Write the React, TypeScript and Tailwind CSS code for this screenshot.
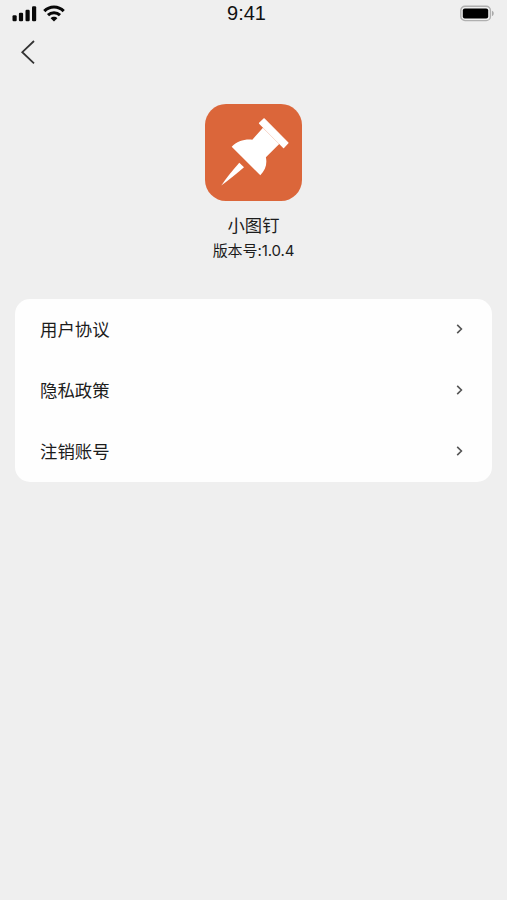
const menuItems = ["用户协议", "隐私政策", "注销账号"];

function StatusBar() {
  return (
    <div className="flex h-7 items-center justify-between pr-[13px] pl-3">
      <div className="flex w-[60px] items-center gap-[6px]">
        <svg width="25" height="16" viewBox="0 0 25 16" fill="#080808">
          <rect x="0.5" y="9.2" width="4.2" height="6" rx="1.2" />
          <rect x="6.9" y="6.8" width="4.2" height="8.4" rx="1.2" />
          <rect x="13.5" y="3.7" width="4.2" height="11.5" rx="1.2" />
          <rect x="20" y="0.2" width="4.2" height="15" rx="1.2" />
        </svg>
        <svg
          className="mb-px shrink-0"
          width="22"
          height="17"
          viewBox="0 0 22 17"
          fill="none"
          stroke="#080808"
          strokeWidth="3.1"
        >
          <path d="M1.3 6.1C6.7.7 15.3.7 20.7 6.1" />
          <path d="M5 10.1C8.4 6.9 13.6 6.9 17 10.1" />
          <path d="M7.6 13.2C9.5 11.3 12.5 11.3 14.4 13.2L11 16.6Z" fill="#080808" stroke="none" />
        </svg>
      </div>
      <span className="mr-[13px] mb-[2px] font-['Liberation_Sans',sans-serif] text-[20px] leading-6 text-[#111]">
        9:41
      </span>
      <div className="flex w-[60px] justify-end">
        <svg className="mb-px" width="35" height="17" viewBox="0 0 35 17">
          <rect x="1.8" y="1.2" width="29.6" height="14.4" rx="4.2" fill="none" stroke="#b0b0b0" strokeWidth="1.4" />
          <rect x="3.8" y="3.4" width="25.4" height="10" rx="2" fill="#000" />
          <path d="M33 5.8C35.3 6.8 35.3 10 33 11Z" fill="#aaa" />
        </svg>
      </div>
    </div>
  );
}

function PinLogo() {
  return (
    <svg width="97" height="97" viewBox="0 0 97 97">
      <rect width="97" height="97" rx="21" fill="#db663a" />
      <g fill="#fff">
        <path
          d="M59.2 14.8L83 38.9L78.6 43.6L54.5 19.3Z"
          stroke="#fff"
          strokeWidth="1.2"
          strokeLinejoin="round"
        />
        <path d="M57.9 23.7L74.2 40L60.9 53.2C62.3 60 60.5 66 55.3 71.3L26.7 42.7C32 37 39.5 35 47.3 35.7L58 23.8Z" />
        <path d="M34.3 58.7L39 63.3C31.5 69.6 24.5 75.3 16.3 81.5C21 74.3 27.6 66.5 34.3 58.7Z" />
      </g>
    </svg>
  );
}

function App() {
  return (
    <div className="min-h-screen bg-[#efefef] font-['Noto_Sans_CJK_SC',sans-serif] text-[#1c1c1c]">
      <StatusBar />
      <div className="flex h-12 items-center pl-5">
        <svg width="16" height="24" viewBox="0 0 16 24" fill="none" stroke="#333" strokeWidth="1.8">
          <path d="M14 1L2.3 12.2L14 23.3" />
        </svg>
      </div>

      <div className="mt-7 flex flex-col items-center">
        <PinLogo />
        <h1 className="mt-[11px] text-[17.3px] leading-[26px]">小图钉</h1>
        <p className="mt-px font-[Inter,'Noto_Sans_CJK_SC',sans-serif] text-[15px] leading-[23px] tracking-[-0.1px]">
          版本号:1.0.4
        </p>
      </div>

      <div className="mx-[15px] mt-[37px] rounded-[15px] bg-[#fefefe]">
        {menuItems.map((item) => (
          <div key={item} className="flex h-[61px] items-center justify-between pr-[29px] pl-[25px]">
            <span className="mb-[2px] text-[17.4px] leading-6">{item}</span>
            <svg
              className="mb-px"
              width="7"
              height="10"
              viewBox="0 0 7 10"
              fill="none"
              stroke="#555"
              strokeWidth="1.6"
            >
              <path d="M1.2 0.9L5.4 5L1.2 9.1" />
            </svg>
          </div>
        ))}
      </div>
    </div>
  );
}

export default App;
